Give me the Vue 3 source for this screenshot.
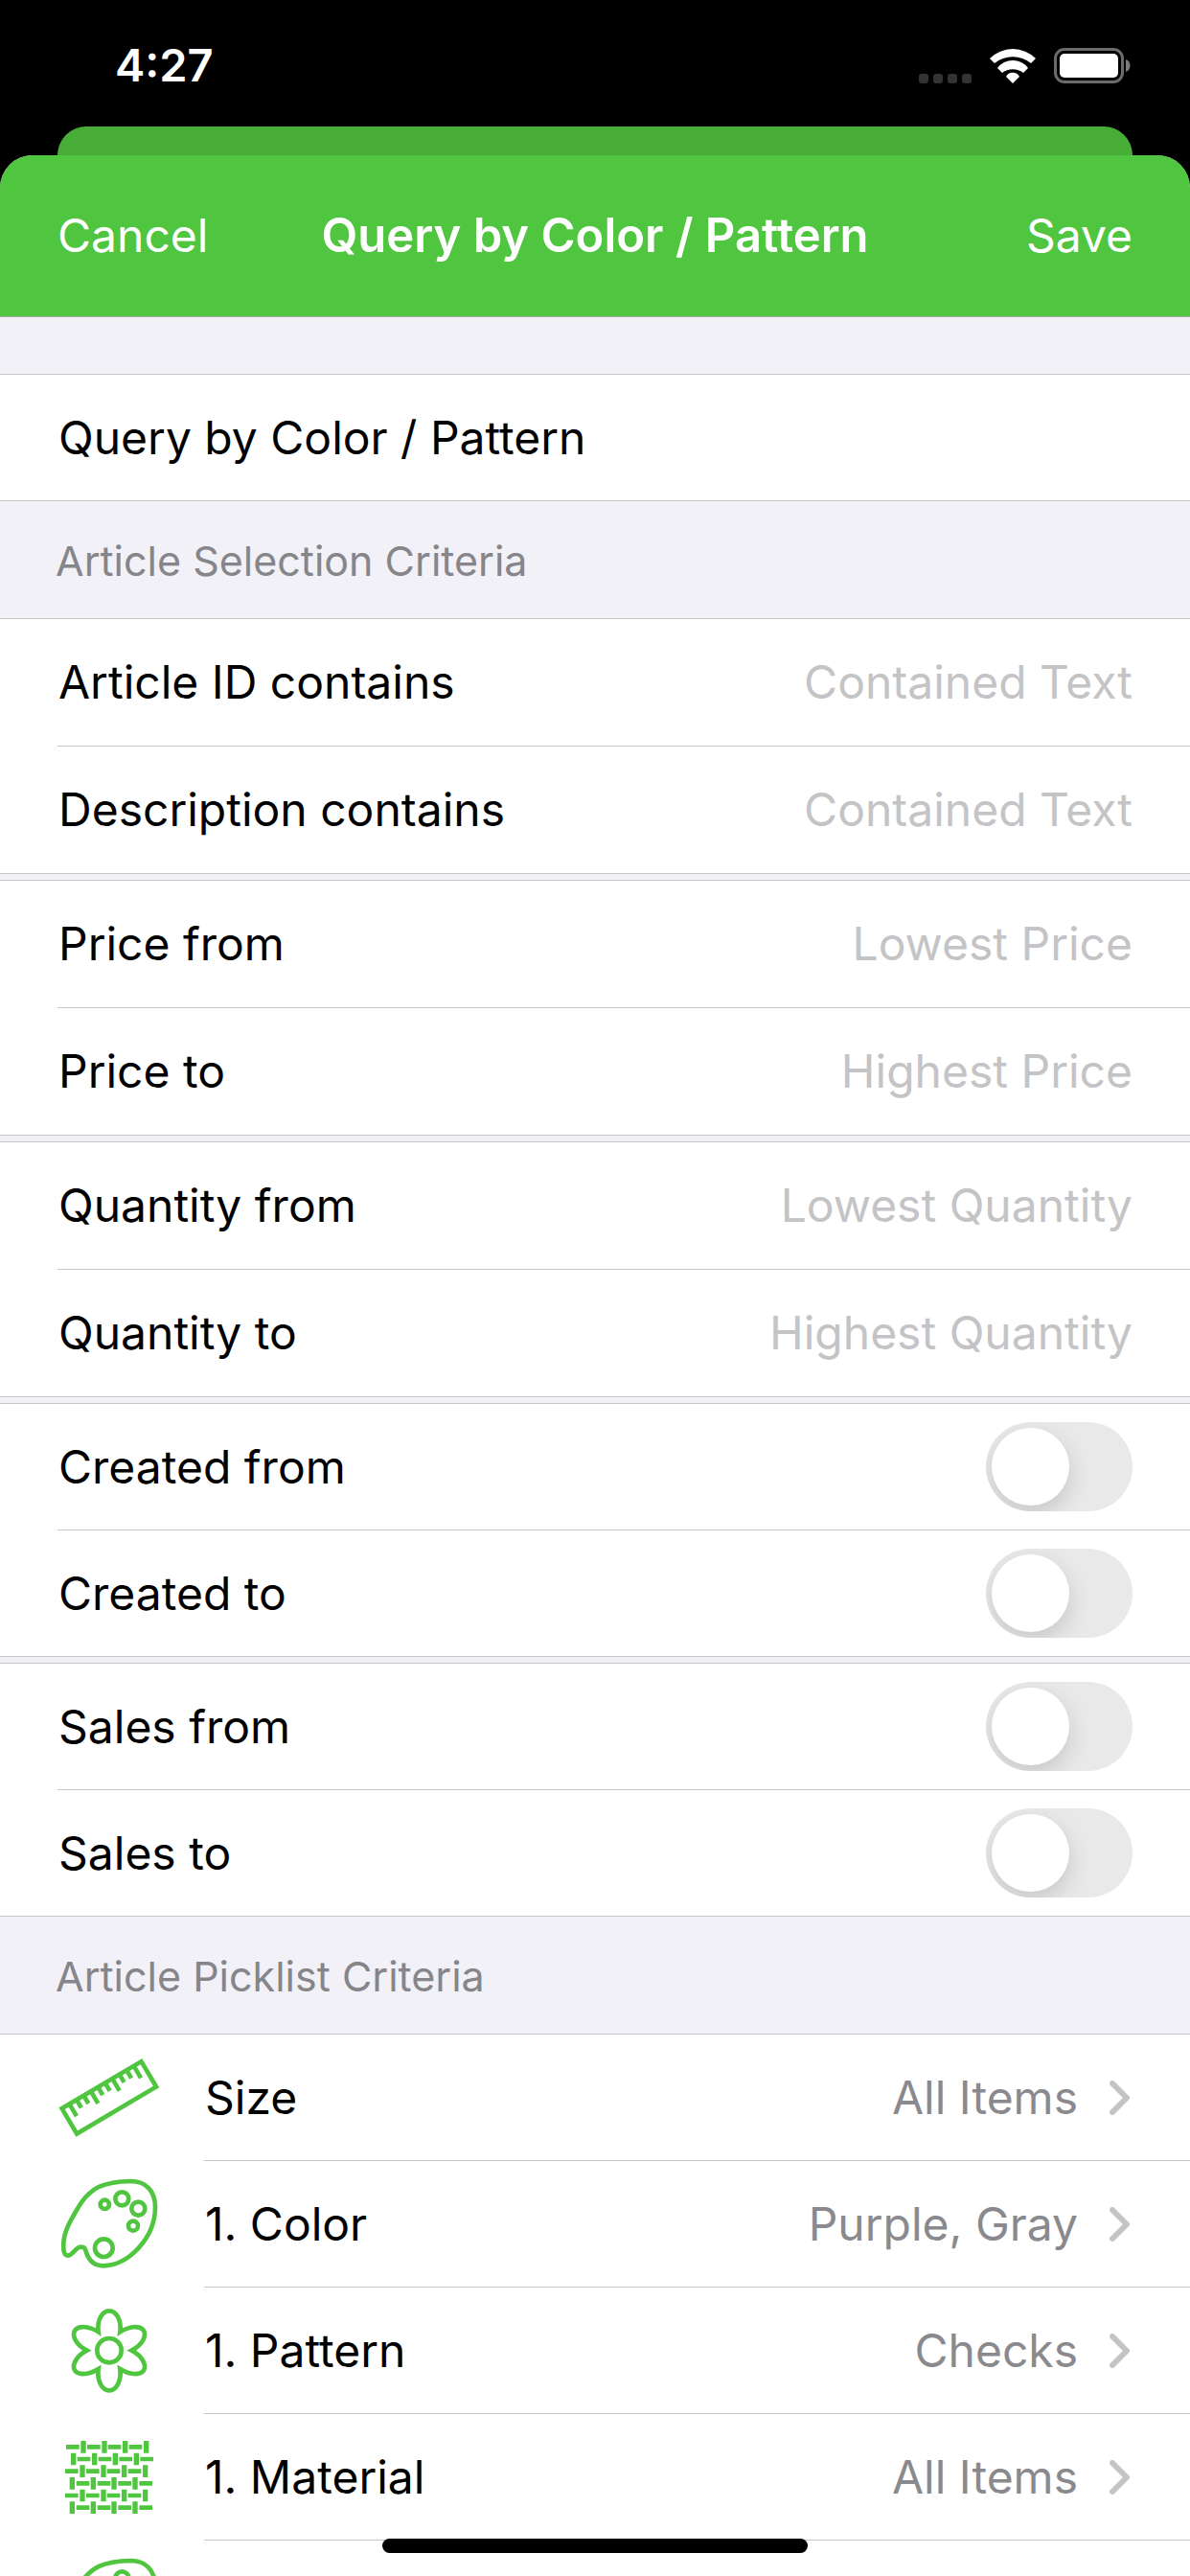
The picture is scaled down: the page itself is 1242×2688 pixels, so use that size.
<script setup>
import { ref } from 'vue'

const queryName = ref('Query by Color / Pattern')

const fieldGroups = [
  [
    { id: 'article-id', label: 'Article ID contains', placeholder: 'Contained Text' },
    { id: 'description', label: 'Description contains', placeholder: 'Contained Text' },
  ],
  [
    { id: 'price-from', label: 'Price from', placeholder: 'Lowest Price' },
    { id: 'price-to', label: 'Price to', placeholder: 'Highest Price' },
  ],
  [
    { id: 'quantity-from', label: 'Quantity from', placeholder: 'Lowest Quantity' },
    { id: 'quantity-to', label: 'Quantity to', placeholder: 'Highest Quantity' },
  ],
]

const toggleGroups = [
  [
    { id: 'created-from', label: 'Created from' },
    { id: 'created-to', label: 'Created to' },
  ],
  [
    { id: 'sales-from', label: 'Sales from' },
    { id: 'sales-to', label: 'Sales to' },
  ],
]

const picklists = [
  { icon: 'ruler', label: 'Size', value: 'All Items' },
  { icon: 'palette', label: '1. Color', value: 'Purple, Gray' },
  { icon: 'flower', label: '1. Pattern', value: 'Checks' },
  { icon: 'weave', label: '1. Material', value: 'All Items' },
  { icon: 'palette' },
]

const viewBoxes = {
  ruler: '60 72 324 324',
  palette: '60 468 324 324',
  flower: '60 54 324 324',
  weave: '60 450 324 324',
}

// Ruler marks: every third one is long.
const marks = Array.from({ length: 10 }, (_, i) => `M${-117 + i * 26} -42V${i % 3 ? -17 : -2}`).join('')

// Woven threads: [row centre, first horizontal, first vertical]
const threads = [
  [517, 87, 141],
  [555, 122, 110],
  [593, 84, 138],
  [631, 119, 106],
  [669, 84, 138],
  [707, 119, 106],
]
const weft = threads.map(([y, h]) => [0, 66, 131, 197].map((d) => `M${h + d} ${y}h41`).join('')).join('')
const warp = threads.map(([y, , v]) => [0, 66, 131, 197].map((d) => `M${v + d} ${y - 19}v38`).join('')).join('')
</script>

<template>
  <div class="screen">
    <div class="status">
      <span class="time">4:27</span>
      <div class="indicators">
        <div class="signal"><i v-for="n in 4" :key="n"></i></div>
        <svg class="wifi" viewBox="0 0 48 36" aria-hidden="true">
          <path d="M0 10A34 34 0 0 1 48 10L43 15A30 30 0 0 0 5 15Z" />
          <path d="M8 20A20 20 0 0 1 40 20L35 25A18 18 0 0 0 13 25Z" />
          <path d="M17 29A8 8 0 0 1 31 29L24 36Z" />
        </svg>
        <svg class="battery" viewBox="0 0 80 37" aria-hidden="true">
          <rect x="1.5" y="1.5" width="70" height="34" rx="9.5" fill="none" stroke="#6b6b6b" stroke-width="3" />
          <rect x="6" y="6" width="61" height="25" rx="5" fill="#fff" />
          <path d="M75 12c6 2 6 11 0 13z" fill="#7b7b7b" />
        </svg>
      </div>
    </div>

    <div class="back-sheet"></div>
    <main class="sheet">
      <header class="bar">
        <button type="button" class="bar-button">Cancel</button>
        <h1>Query by Color / Pattern</h1>
        <button type="button" class="bar-button end">Save</button>
      </header>

      <div class="list">
        <section class="group first">
          <div class="row">
            <div class="body">
              <input v-model="queryName" class="name" type="text" aria-label="Query by Color / Pattern" />
            </div>
          </div>
        </section>

        <h2>Article Selection Criteria</h2>
        <section v-for="(group, g) in fieldGroups" :key="g" class="group fields">
          <div v-for="field in group" :key="field.id" class="row">
            <div class="body">
              <label :for="field.id">{{ field.label }}</label>
              <input :id="field.id" class="field" type="text" :placeholder="field.placeholder" />
            </div>
          </div>
        </section>
        <section v-for="(group, g) in toggleGroups" :key="'t' + g" class="group">
          <div v-for="item in group" :key="item.id" class="row">
            <div class="body">
              <label :for="item.id">{{ item.label }}</label>
              <input :id="item.id" class="switch" type="checkbox" />
            </div>
          </div>
        </section>

        <h2>Article Picklist Criteria</h2>
        <section class="group">
          <button v-for="(item, i) in picklists" :key="i" type="button" class="row pick">
            <svg class="icon" :viewBox="viewBoxes[item.icon]" aria-hidden="true">
              <g v-if="item.icon === 'ruler'" transform="translate(221.5 233.5) rotate(-30.6)">
                <rect x="-144.5" y="-46" width="289" height="92" />
                <path :d="marks" />
              </g>
              <template v-else-if="item.icon === 'palette'">
                <path d="M290 495C335 495 366 525 366 576C366 672 282 760 203 760C173 760 158 742 150 718C147 706 146 701 134 701C116 701 108 728 92 728C80 728 78 712 79 688C81 650 102 616 125 577C163 513 205 497 290 495Z" />
                <circle cx="208" cy="568" r="14" />
                <circle cx="262" cy="550" r="21" />
                <circle cx="313" cy="581" r="21" />
                <circle cx="297" cy="635" r="15" />
                <circle cx="205" cy="704" r="28" />
              </template>
              <template v-else-if="item.icon === 'flower'">
                <path d="M188 157C183 120 200 91 222 91S261 120 256 157C285 139 315 137 328 150C340 165 330 195 292 215C330 235 340 265 328 280C315 293 285 291 256 273C261 310 244 340 222 340S183 310 188 273C159 291 129 293 116 280C104 265 114 235 152 215C114 195 104 165 116 150C129 137 159 139 188 157Z" />
                <circle cx="222" cy="215" r="38" />
              </template>
              <template v-else>
                <path :d="weft" />
                <path :d="warp" stroke-width="16" />
              </template>
            </svg>
            <span class="body">
              <span>{{ item.label }}</span>
              <span v-if="item.value" class="value">{{ item.value }}</span>
              <svg v-if="item.value" class="chevron" viewBox="0 0 21 36" aria-hidden="true">
                <path d="M3 3L18 18L3 33" />
              </svg>
            </span>
          </button>
        </section>
      </div>
    </main>
    <div class="home"></div>
  </div>
</template>

<style>
body {
  margin: 0;
  background: #000;
}
</style>

<style scoped>
.screen {
  position: relative;
  display: flex;
  flex-direction: column;
  height: 100vh;
  overflow: hidden;
  background: #000;
  color: #000;
  font-family: Inter, 'Liberation Sans', sans-serif;
  font-size: 48px;
  line-height: 60px;
}

button,
input {
  margin: 0;
  padding: 0;
  border: 0;
  background: none;
  color: inherit;
  font: inherit;
}

.status {
  box-sizing: border-box;
  display: flex;
  flex: none;
  justify-content: space-between;
  align-items: center;
  height: 132px;
  padding: 4px 62px 0 120px;
}

.time {
  color: #fff;
  font-size: 47px;
  font-weight: 600;
}

.indicators {
  display: flex;
  align-items: flex-end;
  gap: 19px;
}

.signal {
  display: flex;
  gap: 5px;
}

.signal i {
  width: 10px;
  height: 10px;
  border-radius: 3px;
  background: #333;
}

.wifi {
  width: 48px;
  height: 36px;
  fill: #fff;
}

.battery {
  width: 80px;
  height: 37px;
}

.back-sheet {
  flex: none;
  height: 30px;
  margin: 0 60px;
  border-radius: 30px 30px 0 0;
  background: #47ad36;
}

.sheet {
  display: flex;
  flex: 1;
  flex-direction: column;
  min-height: 0;
  overflow: hidden;
  border-radius: 34px 34px 0 0;
  background: #f2f1f7;
}

.bar {
  display: grid;
  flex: none;
  grid-template-columns: 1fr auto 1fr;
  align-items: center;
  height: 168px;
  padding: 0 60px;
  border-bottom: 1px solid #a9aaad;
  background: #50c53f;
  color: #fff;
}

.bar-button {
  text-align: left;
}

.bar-button.end {
  text-align: right;
}

h1 {
  margin: 0;
  font-size: 49px;
  font-weight: 600;
}

.list {
  flex: 1;
  min-height: 0;
  overflow-y: auto;
  scrollbar-width: none;
}

h2 {
  margin: 0;
  padding: 32px 58px 30px;
  color: #85858a;
  font-size: 43px;
  font-weight: 400;
}

.group {
  border: solid #c6c6c8;
  border-width: 1px 0;
  background: #fff;
}

.group.first {
  margin-top: 59px;
}

.group + .group {
  margin-top: 6px;
}

.row {
  display: flex;
  padding-left: 60px;
}

.body {
  display: flex;
  flex: 1;
  align-items: center;
  min-width: 0;
  min-height: 131px;
  padding: 0 60px 0 1px;
  border-bottom: 1px solid #c6c6c8;
}

.fields .body {
  min-height: 132px;
}

.row:last-child .body {
  border-bottom: 0;
}

.name {
  flex: 1;
  min-width: 0;
}

.field {
  flex: 1;
  min-width: 0;
  text-align: right;
}

.field::placeholder {
  color: #c4c4c6;
  opacity: 1;
}

.switch {
  appearance: none;
  width: 153px;
  height: 93px;
  margin-left: auto;
  overflow: hidden;
  border-radius: 47px;
  background: #e9e9ea;
}

.switch::before {
  content: '';
  display: block;
  width: 81px;
  height: 81px;
  margin: 6px;
  border-radius: 50%;
  background: #fff;
  box-shadow: 0 9px 24px rgba(0, 0, 0, 0.15);
}

.switch:checked {
  background: #50c53f;
}

.switch:checked::before {
  margin-left: 66px;
}

.pick {
  align-items: center;
  gap: 45px;
  width: 100%;
  text-align: left;
}

.icon {
  flex: none;
  width: 108px;
  height: 108px;
  fill: none;
  stroke: #50c53f;
  stroke-width: 14;
}

.value {
  margin-left: auto;
  color: #8a8a8e;
}

.chevron {
  width: 21px;
  height: 36px;
  margin: 0 3px 0 33px;
  fill: none;
  stroke: #c4c4c6;
  stroke-width: 6;
  stroke-linecap: round;
  stroke-linejoin: round;
}

.home {
  position: absolute;
  bottom: 24px;
  left: 50%;
  width: 444px;
  height: 15px;
  margin-left: -222px;
  border-radius: 8px;
  background: #000;
}
</style>
